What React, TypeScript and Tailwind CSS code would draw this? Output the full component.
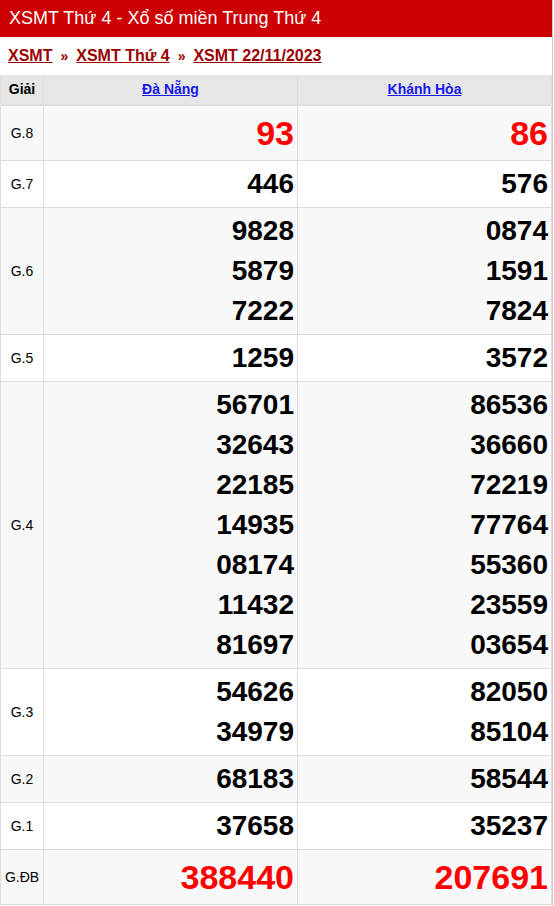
import React from 'react';

interface Prize {
  label: string;
  left: string[];
  right: string[];
  red?: boolean;
}

const prizes: Prize[] = [
  { label: 'G.8', left: ['93'], right: ['86'], red: true },
  { label: 'G.7', left: ['446'], right: ['576'] },
  { label: 'G.6', left: ['9828', '5879', '7222'], right: ['0874', '1591', '7824'] },
  { label: 'G.5', left: ['1259'], right: ['3572'] },
  {
    label: 'G.4',
    left: ['56701', '32643', '22185', '14935', '08174', '11432', '81697'],
    right: ['86536', '36660', '72219', '77764', '55360', '23559', '03654'],
  },
  { label: 'G.3', left: ['54626', '34979'], right: ['82050', '85104'] },
  { label: 'G.2', left: ['68183'], right: ['58544'] },
  { label: 'G.1', left: ['37658'], right: ['35237'] },
  { label: 'G.ĐB', left: ['388440'], right: ['207691'], red: true },
];

const NumberCell: React.FC<{ values: string[]; red?: boolean; last?: boolean }> = ({ values, red, last }) => (
  <div
    className={`flex flex-col items-end justify-center py-[3px] pr-[3px] font-bold ${last ? '' : 'border-r border-[#dddddd]'}`}
  >
    {values.map((v) => (
      <span
        key={v}
        className={red ? 'text-[34px] leading-[48px] text-[#ff0000]' : 'text-[28px] leading-[40px] text-black'}
      >
        {v}
      </span>
    ))}
  </div>
);

export default function App() {
  return (
    <div className="w-[554px] min-h-[906px] bg-white font-['Liberation_Sans',Arial,sans-serif]">
      <div className="w-[553px] border-r border-[#cccccc] min-h-[906px]">
        <div className="h-[37px] bg-[#cc0000] pl-[9px] flex items-center text-white text-[18px]">
          XSMT Thứ 4 - Xổ số miền Trung Thứ 4
        </div>
        <div className="h-[38px] flex items-center pl-[8px] text-[16px] font-bold text-[#990000]">
          <a href="#" className="underline">XSMT</a>
          <span className="mx-[8px] text-[14px]">»</span>
          <a href="#" className="underline">XSMT Thứ 4</a>
          <span className="mx-[8px] text-[14px]">»</span>
          <a href="#" className="underline">XSMT 22/11/2023</a>
        </div>
        <div className="border-l border-r border-[#dddddd]">
          <div className="grid grid-cols-[43px_254px_1fr] bg-[#e6e6e6] h-[31px] border-b-2 border-[#dddddd] text-[14px]">
            <div className="flex items-center justify-center border-r border-[#dddddd] font-bold text-[14px] text-black">
              Giải
            </div>
            <div className="flex items-center justify-center border-r border-[#dddddd]">
              <a href="#" className="underline text-[#1a1ae6] font-bold">Đà Nẵng</a>
            </div>
            <div className="flex items-center justify-center">
              <a href="#" className="underline text-[#1a1ae6] font-bold">Khánh Hòa</a>
            </div>
          </div>
          {prizes.map((p, i) => (
            <div
              key={p.label}
              className={`grid grid-cols-[43px_254px_1fr] border-b border-[#dddddd] ${i % 2 === 0 ? 'bg-[#f8f8f8]' : 'bg-white'}`}
            >
              <div className="flex items-center justify-center border-r border-[#dddddd] text-[14px] text-black">
                {p.label}
              </div>
              <NumberCell values={p.left} red={p.red} />
              <NumberCell values={p.right} red={p.red} last />
            </div>
          ))}
        </div>
      </div>
    </div>
  );
}
